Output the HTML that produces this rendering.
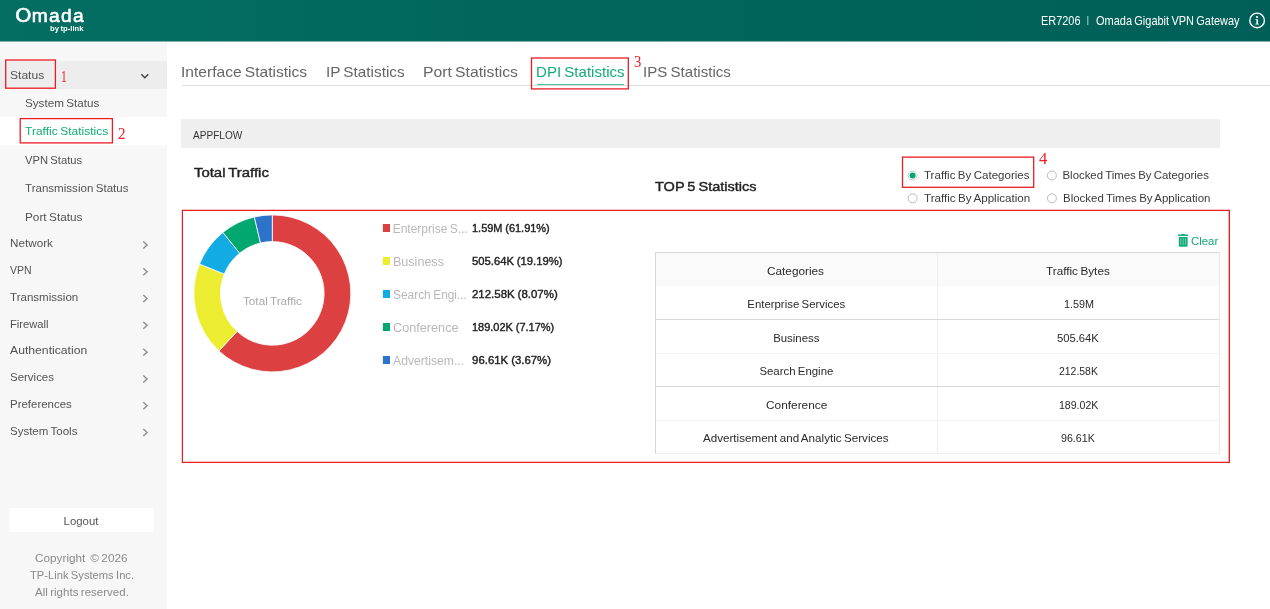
<!DOCTYPE html>
<html lang="en">
<head>
<meta charset="utf-8">
<title>Omada - DPI Statistics</title>
<style>
*{box-sizing:border-box;margin:0;padding:0}
html,body{width:1270px;height:609px;overflow:hidden;background:#fff}
body{font-family:"Liberation Sans",sans-serif;color:#444;position:relative;font-size:12px}
.a{position:absolute}
.t{position:absolute;white-space:nowrap;transform-origin:0 0}
#hdr{left:0;top:0;width:1270px;height:41px;background:linear-gradient(to right,#046e63 0%,#00655c 50%,#006059 100%)}
#hdrb{left:0;top:41px;width:1270px;height:1px;background:linear-gradient(to right,#7fb5af,#7fb0ab)}
#side{left:0;top:42px;width:167px;height:567px;background:#f7f7f7}
#app{position:absolute;left:0;top:0;width:1270px;height:609px;overflow:hidden;will-change:transform}
#ov{left:0;top:0;width:1270px;height:609px;pointer-events:none}
</style>
</head>
<body>
<div id="app">
<div class="a" id="hdr"></div>
<div class="a" id="hdrb"></div>
<div class="a" id="side"></div>
<div class="a" style="left:0;top:61px;width:167px;height:28px;background:#ededed"></div>
<div class="a" style="left:0;top:117px;width:167px;height:28px;background:#fff"></div>
<div class="a" style="left:0;top:145px;width:167px;height:1px;background:#fbfbfb"></div>
<div class="a" style="left:9px;top:508px;width:145px;height:24px;background:#fff;border-radius:2px"></div>

<div class="a" style="left:182px;top:85px;width:1088px;height:1px;background:#dcdcdc"></div>
<div class="a" style="left:537px;top:84px;width:87px;height:1px;background:#4fc09a"></div>
<div class="a" style="left:181px;top:119px;width:1038.5px;height:29px;background:#efefef"></div>

<!-- table -->
<div class="a" style="left:656px;top:253px;width:563px;height:33px;background:#fafafa"></div>
<div class="a" style="left:655px;top:252px;width:565px;height:1px;background:#d6d6d6"></div>
<div class="a" style="left:655px;top:252px;width:1px;height:202px;background:#d6d6d6"></div>
<div class="a" style="left:1219px;top:252px;width:1px;height:202px;background:#e8e8e8"></div>
<div class="a" style="left:937px;top:253px;width:1px;height:201px;background:#efefef"></div>
<div class="a" style="left:656px;top:319px;width:563px;height:1px;background:#d8d8d8"></div>
<div class="a" style="left:656px;top:353px;width:563px;height:1px;background:#f3f3f3"></div>
<div class="a" style="left:656px;top:386px;width:563px;height:1px;background:#d8d8d8"></div>
<div class="a" style="left:656px;top:420px;width:563px;height:1px;background:#f3f3f3"></div>
<div class="a" style="left:656px;top:453px;width:563px;height:1px;background:#f0f0f0"></div>

<svg class="a" style="left:190px;top:211px" width="164" height="164" viewBox="0 0 164 164"><path d="M82.30 3.90A78.5 78.5 0 1 1 28.91 139.95L47.07 120.37A51.8 51.8 0 1 0 82.30 30.60Z" fill="#dc4040" stroke="#fff" stroke-width="0.8" stroke-linejoin="round"/><path d="M28.91 139.95A78.5 78.5 0 0 1 9.48 53.08L34.25 63.05A51.8 51.8 0 0 0 47.07 120.37Z" fill="#eced30" stroke="#fff" stroke-width="0.8" stroke-linejoin="round"/><path d="M9.48 53.08A78.5 78.5 0 0 1 32.88 21.41L49.69 42.16A51.8 51.8 0 0 0 34.25 63.05Z" fill="#12abe4" stroke="#fff" stroke-width="0.8" stroke-linejoin="round"/><path d="M32.88 21.41A78.5 78.5 0 0 1 64.36 5.98L70.46 31.97A51.8 51.8 0 0 0 49.69 42.16Z" fill="#00a76f" stroke="#fff" stroke-width="0.8" stroke-linejoin="round"/><path d="M64.36 5.98A78.5 78.5 0 0 1 82.30 3.90L82.30 30.60A51.8 51.8 0 0 0 70.46 31.97Z" fill="#2d73c9" stroke="#fff" stroke-width="0.8" stroke-linejoin="round"/></svg>

<!-- logo -->
<div class="t" id="logo" style="left:0;top:0;width:100px;height:26px;color:#fff"><span class="t" id="lgO" style="left:14.5px;top:0px;font-family:'DejaVu Sans','Liberation Sans',sans-serif;font-size:20.3px;line-height:30px;-webkit-text-stroke:0.5px #fff;transform:scaleX(1.04)">O</span><span class="t" id="lgM" style="left:31.7px;top:2px;font-size:19.2px;line-height:26px;letter-spacing:1.3px;-webkit-text-stroke:0.6px #fff;transform:translateY(0.6px)">mada</span></div>
<header class="g" id="top">
<div class="t" style="left:50.40px;top:23px;font-size:8px;line-height:12px;color:#fff;transform:scaleX(0.9593);word-spacing:-0.56px;font-weight:bold">by tp-link</div>
<div class="t" style="left:1040.53px;top:12px;font-size:12.6px;line-height:18px;color:#fff;transform:scaleX(0.8673)">ER7206</div>
<div class="t" style="left:1086.70px;top:14px;font-size:8.5px;line-height:12px;color:#d5ebe8">|</div>
<div class="t" style="left:1095.50px;top:12px;font-size:12.6px;line-height:18px;color:#fff;transform:scaleX(0.8721);word-spacing:-0.88px">Omada Gigabit VPN Gateway</div>
</header>
<nav class="g" id="menu">
<div class="t" style="left:10.40px;top:67px;font-size:11.4px;line-height:16px;color:#525252;transform:scaleX(1.0584)">Status</div>
<div class="t" style="left:24.60px;top:95px;font-size:11.4px;line-height:16px;color:#525252;transform:scaleX(1.0241);word-spacing:-0.80px">System Status</div>
<div class="t" style="left:24.90px;top:123px;font-size:11.4px;line-height:16px;color:#13ac76;transform:scaleX(1.0535);word-spacing:-0.80px">Traffic Statistics</div>
<div class="t" style="left:24.90px;top:152px;font-size:11.4px;line-height:16px;color:#525252;transform:scaleX(0.9831);word-spacing:-0.80px">VPN Status</div>
<div class="t" style="left:24.90px;top:180px;font-size:11.4px;line-height:16px;color:#525252;transform:scaleX(1.0150);word-spacing:-0.80px">Transmission Status</div>
<div class="t" style="left:24.90px;top:209px;font-size:11.4px;line-height:16px;color:#525252;transform:scaleX(1.0348);word-spacing:-0.80px">Port Status</div>
<div class="t" style="left:10.40px;top:235px;font-size:11.4px;line-height:16px;color:#525252;transform:scaleX(1.0266)">Network</div>
<div class="t" style="left:10.40px;top:262px;font-size:11.4px;line-height:16px;color:#525252;transform:scaleX(0.9226)">VPN</div>
<div class="t" style="left:10.40px;top:289px;font-size:11.4px;line-height:16px;color:#525252;transform:scaleX(1.0139)">Transmission</div>
<div class="t" style="left:10.40px;top:316px;font-size:11.4px;line-height:16px;color:#525252;transform:scaleX(0.9817)">Firewall</div>
<div class="t" style="left:10.40px;top:342px;font-size:11.4px;line-height:16px;color:#525252;transform:scaleX(1.0702)">Authentication</div>
<div class="t" style="left:10.40px;top:369px;font-size:11.4px;line-height:16px;color:#525252;transform:scaleX(1.0072)">Services</div>
<div class="t" style="left:10.40px;top:396px;font-size:11.4px;line-height:16px;color:#525252;transform:scaleX(1.0062)">Preferences</div>
<div class="t" style="left:10.40px;top:423px;font-size:11.4px;line-height:16px;color:#525252;transform:scaleX(1.0099);word-spacing:-0.80px">System Tools</div>
<div class="t" style="left:63.60px;top:513px;font-size:11.4px;line-height:16px;color:#555">Logout</div>
<div class="t" style="left:35.20px;top:550px;font-size:11.4px;line-height:16px;color:#8a8a8a;transform:scaleX(1.0331);word-spacing:-0.80px">Copyright &nbsp;&copy; 2026</div>
<div class="t" style="left:29.80px;top:567px;font-size:11.4px;line-height:16px;color:#8a8a8a;transform:scaleX(0.9816);word-spacing:-0.80px">TP-Link Systems Inc.</div>
<div class="t" style="left:34.60px;top:584px;font-size:11.4px;line-height:16px;color:#8a8a8a;transform:scaleX(1.0123);word-spacing:-0.80px">All rights reserved.</div>
</nav>
<main class="g">
<div class="g" id="tabs">
<div class="t" style="left:180.73px;top:62px;font-size:14.5px;line-height:21px;color:#666;transform:scaleX(1.0740);word-spacing:-1.02px">Interface Statistics</div>
<div class="t" style="left:325.54px;top:62px;font-size:14.5px;line-height:21px;color:#666;transform:scaleX(1.0561);word-spacing:-1.02px">IP Statistics</div>
<div class="t" style="left:422.62px;top:62px;font-size:14.5px;line-height:21px;color:#666;transform:scaleX(1.0837);word-spacing:-1.02px">Port Statistics</div>
<div class="t" style="left:535.96px;top:62px;font-size:14.5px;line-height:21px;color:#13ac76;transform:scaleX(1.0399);word-spacing:-1.02px">DPI Statistics</div>
<div class="t" style="left:642.66px;top:62px;font-size:14.5px;line-height:21px;color:#666;transform:scaleX(1.0415);word-spacing:-1.02px">IPS Statistics</div>
</div>
<section class="g" id="titles">
<div class="t" style="left:193.30px;top:127px;font-size:11.4px;line-height:16px;color:#333;transform:scaleX(0.8848)">APPFLOW</div>
<div class="t" style="left:193.70px;top:163px;font-size:13px;line-height:19px;color:#222;transform:scaleX(1.1460);word-spacing:-0.91px;-webkit-text-stroke:0.4px #222">Total Traffic</div>
<div class="t" style="left:655.10px;top:177px;font-size:13px;line-height:19px;color:#222;transform:scaleX(1.1175);word-spacing:-0.91px;-webkit-text-stroke:0.4px #222">TOP 5 Statistics</div>
</section>
<div class="g" id="opts">
<div class="t" style="left:923.60px;top:167px;font-size:11.4px;line-height:16px;color:#3a3a3a;transform:scaleX(1.0131);word-spacing:-0.80px">Traffic By Categories</div>
<div class="t" style="left:1062.50px;top:167px;font-size:11.4px;line-height:16px;color:#3a3a3a;word-spacing:-0.80px">Blocked Times By Categories</div>
<div class="t" style="left:923.60px;top:190px;font-size:11.4px;line-height:16px;color:#3a3a3a;transform:scaleX(1.0208);word-spacing:-0.80px">Traffic By Application</div>
<div class="t" style="left:1062.50px;top:190px;font-size:11.4px;line-height:16px;color:#3a3a3a;transform:scaleX(1.0069);word-spacing:-0.80px">Blocked Times By Application</div>
</div>
<div class="g" id="chart">
<div class="t" style="left:242.60px;top:293px;font-size:11.4px;line-height:16px;color:#aaa;transform:scaleX(1.0287);word-spacing:-0.80px">Total Traffic</div>
<div class="t" style="left:392.70px;top:221px;font-size:12px;line-height:17px;color:#b8b8b8;word-spacing:-0.84px">Enterprise S...</div>
<div class="t" style="left:472.10px;top:220px;font-size:11.4px;line-height:16px;color:#222;transform:scaleX(0.9615);word-spacing:-0.23px;-webkit-text-stroke:0.4px #222">1.59M (61.91%)</div>
<div class="t" style="left:392.70px;top:254px;font-size:12px;line-height:17px;color:#b8b8b8;transform:scaleX(1.0454)">Business</div>
<div class="t" style="left:472.10px;top:253px;font-size:11.4px;line-height:16px;color:#222;transform:scaleX(0.9880);word-spacing:-0.23px;-webkit-text-stroke:0.4px #222">505.64K (19.19%)</div>
<div class="t" style="left:392.70px;top:287px;font-size:12px;line-height:17px;color:#b8b8b8;transform:scaleX(0.9919);word-spacing:-0.84px">Search Engi...</div>
<div class="t" style="left:472.10px;top:286px;font-size:11.4px;line-height:16px;color:#222;transform:scaleX(1.0051);word-spacing:-0.23px;-webkit-text-stroke:0.4px #222">212.58K (8.07%)</div>
<div class="t" style="left:392.70px;top:320px;font-size:12px;line-height:17px;color:#b8b8b8;transform:scaleX(1.0567)">Conference</div>
<div class="t" style="left:472.10px;top:319px;font-size:11.4px;line-height:16px;color:#222;transform:scaleX(0.9641);word-spacing:-0.23px;-webkit-text-stroke:0.4px #222">189.02K (7.17%)</div>
<div class="t" style="left:392.70px;top:353px;font-size:12px;line-height:17px;color:#b8b8b8;transform:scaleX(1.0160)">Advertisem...</div>
<div class="t" style="left:472.10px;top:352px;font-size:11.4px;line-height:16px;color:#222;word-spacing:-0.23px;-webkit-text-stroke:0.4px #222">96.61K (3.67%)</div>
</div>
<div class="g" id="tools">
<div class="t" style="left:1190.70px;top:233px;font-size:11.4px;line-height:16px;color:#13ac76;transform:scaleX(0.9917)">Clear</div>
</div>
<div class="g" id="grid">
<div class="t" style="left:767.40px;top:263px;font-size:11.4px;line-height:16px;color:#2a2a2a;transform:scaleX(1.0345)">Categories</div>
<div class="t" style="left:1046.20px;top:263px;font-size:11.4px;line-height:16px;color:#2a2a2a;transform:scaleX(1.0310);word-spacing:-0.80px">Traffic Bytes</div>
<div class="t" style="left:747.30px;top:296px;font-size:11.4px;line-height:16px;color:#2a2a2a;word-spacing:-0.80px">Enterprise Services</div>
<div class="t" style="left:1063.60px;top:296px;font-size:11.4px;line-height:16px;color:#2a2a2a;transform:scaleX(0.9496)">1.59M</div>
<div class="t" style="left:773.20px;top:330px;font-size:11.4px;line-height:16px;color:#2a2a2a">Business</div>
<div class="t" style="left:1057.30px;top:330px;font-size:11.4px;line-height:16px;color:#2a2a2a;transform:scaleX(0.9851)">505.64K</div>
<div class="t" style="left:759.40px;top:363px;font-size:11.4px;line-height:16px;color:#2a2a2a;word-spacing:-0.80px">Search Engine</div>
<div class="t" style="left:1058.50px;top:363px;font-size:11.4px;line-height:16px;color:#2a2a2a;transform:scaleX(0.9150)">212.58K</div>
<div class="t" style="left:765.70px;top:397px;font-size:11.4px;line-height:16px;color:#2a2a2a;transform:scaleX(1.0418)">Conference</div>
<div class="t" style="left:1058.50px;top:397px;font-size:11.4px;line-height:16px;color:#2a2a2a;transform:scaleX(0.9267)">189.02K</div>
<div class="t" style="left:703.20px;top:430px;font-size:11.4px;line-height:16px;color:#2a2a2a;transform:scaleX(1.0204);word-spacing:-0.80px">Advertisement and Analytic Services</div>
<div class="t" style="left:1061.30px;top:430px;font-size:11.4px;line-height:16px;color:#2a2a2a;transform:scaleX(0.9341)">96.61K</div>
</div>
</main>
<div class="g" id="notes">
<div class="t" style="left:61.19px;top:65px;font-size:16px;line-height:23px;color:#ea1f27;transform:scaleX(0.7143);font-family:'Liberation Serif',serif">1</div>
<div class="t" style="left:117.70px;top:122px;font-size:16px;line-height:23px;color:#ea1f27;transform:scaleX(0.9500);font-family:'Liberation Serif',serif">2</div>
<div class="t" style="left:633.80px;top:50px;font-size:16px;line-height:23px;color:#ea1f27;transform:scaleX(0.9125);font-family:'Liberation Serif',serif">3</div>
<div class="t" style="left:1039.10px;top:147px;font-size:16px;line-height:23px;color:#ea1f27;transform:scaleX(1.0375);font-family:'Liberation Serif',serif">4</div>
</div>


<svg class="a" id="ov" width="1270" height="609" viewBox="0 0 1270 609">
<path d="M143.3 241.50L147.1 244.95L143.3 248.40" fill="none" stroke="#8c8c8c" stroke-width="1.4"/><path d="M143.3 268.30L147.1 271.75L143.3 275.20" fill="none" stroke="#8c8c8c" stroke-width="1.4"/><path d="M143.3 295.10L147.1 298.55L143.3 302.00" fill="none" stroke="#8c8c8c" stroke-width="1.4"/><path d="M143.3 321.90L147.1 325.35L143.3 328.80" fill="none" stroke="#8c8c8c" stroke-width="1.4"/><path d="M143.3 348.70L147.1 352.15L143.3 355.60" fill="none" stroke="#8c8c8c" stroke-width="1.4"/><path d="M143.3 375.50L147.1 378.95L143.3 382.40" fill="none" stroke="#8c8c8c" stroke-width="1.4"/><path d="M143.3 402.30L147.1 405.75L143.3 409.20" fill="none" stroke="#8c8c8c" stroke-width="1.4"/><path d="M143.3 429.10L147.1 432.55L143.3 436.00" fill="none" stroke="#8c8c8c" stroke-width="1.4"/><path d="M141.3 74.2L144.8 77.7L148.3 74.2" fill="none" stroke="#444" stroke-width="1.5"/>
<rect x="382.9" y="224" width="7.1" height="8" fill="#dc4040"/><rect x="382.9" y="257" width="7.1" height="8" fill="#eced30"/><rect x="382.9" y="290" width="7.1" height="8" fill="#12abe4"/><rect x="382.9" y="323" width="7.1" height="8" fill="#00a76f"/><rect x="382.9" y="356" width="7.1" height="8" fill="#2d73c9"/>
<!-- radios -->
<circle cx="912.6" cy="175.5" r="4.5" fill="#fff" stroke="#c4c4c4" stroke-width="1"/><circle cx="912.6" cy="175.5" r="3" fill="#00a870"/>
<circle cx="1051.9" cy="175.5" r="4.5" fill="#fff" stroke="#b9b9b9" stroke-width="1"/>
<circle cx="912.6" cy="198.3" r="4.5" fill="#fff" stroke="#b9b9b9" stroke-width="1"/>
<circle cx="1051.9" cy="198.3" r="4.5" fill="#fff" stroke="#b9b9b9" stroke-width="1"/>
<!-- info icon -->
<circle cx="1257.1" cy="20.45" r="7.3" fill="none" stroke="#fff" stroke-width="1.4"/>
<path d="M1255.4 19.2h2.6v4.5h1v0.9h-3.7v-0.9h1.1v-3.6h-1z" fill="#fff"/><rect x="1256.1" y="16.1" width="1.9" height="1.8" rx="0.4" fill="#fff"/>
<!-- trash -->
<path d="M1178 235.9v-0.9q0-0.5 0.5-0.5h2.6q0.4-0.5 1-0.5h1.9q0.6 0 1 0.5h2.6q0.5 0 0.5 0.5v0.9zM1178.8 237.1h8.8v8.4q0 1.2-1.2 1.2h-6.4q-1.2 0-1.2-1.2z" fill="#13ac76"/>
<path d="M1180.9 238.3v6.8M1183.2 238.3v6.8M1185.5 238.3v6.8" stroke="#7ed4b6" stroke-width="0.8" fill="none"/>
<!-- red annotation boxes -->
<g fill="none" stroke="#ec1c24" stroke-width="1.3">
<rect x="5.7" y="60" width="49.7" height="28.2"/>
<rect x="20.2" y="118.6" width="92.2" height="24.3"/>
<rect x="531.5" y="58" width="96.8" height="30.9"/>
<rect x="902.5" y="157.1" width="131.2" height="30.2"/>
</g>
<path fill="#ec1c24" fill-rule="evenodd" d="M181.8 209.85H1230V463H181.8ZM183 211V461.65H1228.65V211Z"/>
</svg>
</div>
</body>
</html>
